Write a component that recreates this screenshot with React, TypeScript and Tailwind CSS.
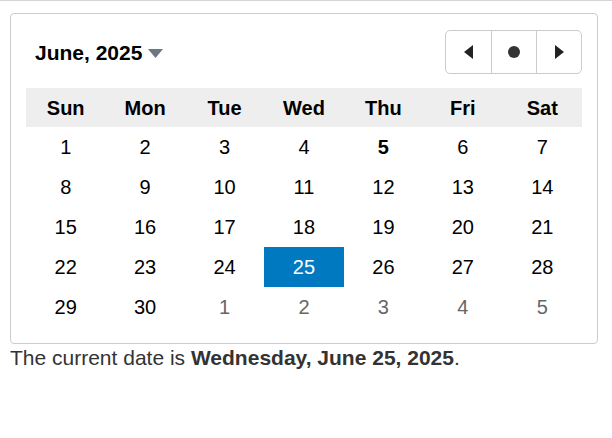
import React from "react";

const weekdays = ["Sun", "Mon", "Tue", "Wed", "Thu", "Fri", "Sat"];

type Day = { n: number; other?: boolean };

const weeks: Day[][] = [
  [1, 2, 3, 4, 5, 6, 7].map((n) => ({ n })),
  [8, 9, 10, 11, 12, 13, 14].map((n) => ({ n })),
  [15, 16, 17, 18, 19, 20, 21].map((n) => ({ n })),
  [22, 23, 24, 25, 26, 27, 28].map((n) => ({ n })),
  [
    { n: 29 },
    { n: 30 },
    { n: 1, other: true },
    { n: 2, other: true },
    { n: 3, other: true },
    { n: 4, other: true },
    { n: 5, other: true },
  ],
];

export default function App() {
  const today = 5;
  const selected = 25;

  return (
    <div className="min-h-[438px] bg-white border-t border-[#d4d4d4] font-['Liberation_Sans',Arial,sans-serif] text-[#333]">
      <div className="pl-[10px] pt-[12px]">
        <div className="w-[588px] border border-[#ccc] rounded-[4px] px-[15px] pt-[16px] pb-[16px]">
          <div className="flex items-center justify-between mb-[14px]">
            <button className="flex items-center gap-[6px] pl-[9px] text-[21px] font-bold text-black leading-none">
              June, 2025
              <svg width="15" height="9" viewBox="0 0 15 9" className="mt-[2px]">
                <path d="M0 0 H15 L7.5 9 Z" fill="#6b7785" />
              </svg>
            </button>
            <div className="flex h-[44px] border border-[#ccc] rounded-[5px]">
              <button className="w-[46px] flex items-center justify-center border-r border-[#ccc]">
                <svg width="10" height="14" viewBox="0 0 10 14">
                  <path d="M9 0 V14 L0 7 Z" fill="#222" />
                </svg>
              </button>
              <button className="w-[45px] flex items-center justify-center border-r border-[#ccc]">
                <span className="w-[12px] h-[12px] rounded-full bg-[#333]" />
              </button>
              <button className="w-[44px] flex items-center justify-center">
                <svg width="10" height="14" viewBox="0 0 10 14">
                  <path d="M1 0 V14 L10 7 Z" fill="#222" />
                </svg>
              </button>
            </div>
          </div>

          <div className="grid grid-cols-7 bg-[#eee] h-[39px] items-center">
            {weekdays.map((d) => (
              <div key={d} className="text-center text-[20px] font-bold text-black leading-none">
                {d}
              </div>
            ))}
          </div>
          {weeks.map((week, i) => (
            <div key={i} className="grid grid-cols-7">
              {week.map((d, j) => {
                const isSel = !d.other && d.n === selected;
                const isToday = !d.other && d.n === today;
                return (
                  <div
                    key={j}
                    className={`h-[40px] flex items-center justify-center text-[20px] ${
                      isSel
                        ? "bg-[#0079c1] text-white"
                        : d.other
                        ? "text-[#666]"
                        : "text-black"
                    } ${isToday ? "font-bold" : ""}`}
                  >
                    {d.n}
                  </div>
                );
              })}
            </div>
          ))}
        </div>
        <p className="text-[21px] leading-[24px] text-[#333] mt-[2px]">
          The current date is <b>Wednesday, June 25, 2025</b>.
        </p>
      </div>
    </div>
  );
}
